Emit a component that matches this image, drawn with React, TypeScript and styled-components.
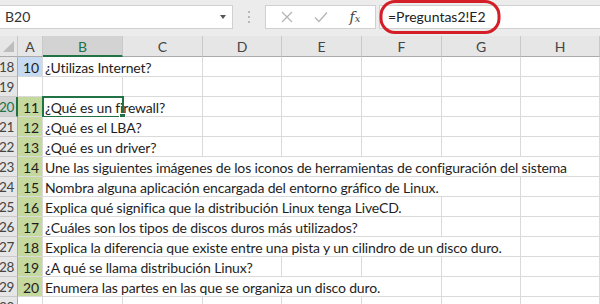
import styled, { createGlobalStyle } from "styled-components";

const GlobalStyle = createGlobalStyle`
    body {
        margin: 0;
        background: #ffffff;
        font-family: "Lato", "Liberation Sans", sans-serif;
    }
`

const COLS = "18px 25px 80px 80px 79px 80px 80px 79px 79px";
const green = "#217346";

const Page = styled.div`
    width: 600px;
    height: 304px;
    overflow: hidden;
    background: #ececec;
`

const Toolbar = styled.div`
    display: flex;
    align-items: center;
    height: 30px;
    padding-top: 3px;
    box-sizing: border-box;
    position: relative;
`

const NameBox = styled.div`
    width: 233px;
    height: 24px;
    box-sizing: border-box;
    background: #fff;
    border: 1px solid #d0d0d0;
    border-left: none;
    display: flex;
    align-items: center;
    justify-content: space-between;
    padding: 0 6px 0 5px;
    font-size: 14px;
    color: #333;
`

const Arrow = styled.span`
    width: 0;
    height: 0;
    border-left: 3.5px solid transparent;
    border-right: 3.5px solid transparent;
    border-top: 4px solid #555;
`

const Dots = styled.div`
    width: 32px;
    display: flex;
    flex-direction: column;
    align-items: center;
    gap: 3px;
    span {
        width: 2px;
        height: 2px;
        background: #b8b8b8;
    }
`

const ButtonBox = styled.div`
    width: 111px;
    height: 24px;
    box-sizing: border-box;
    background: #fff;
    border: 1px solid #d0d0d0;
    display: flex;
    align-items: center;
    justify-content: space-around;
    padding: 0 4px;
`

const Fx = styled.span`
    font-family: "DejaVu Serif", "Liberation Serif", serif;
    font-style: italic;
    font-size: 14px;
    color: #444;
    span { font-size: 10px; }
`

const FormulaBox = styled.div`
    flex: 1;
    height: 24px;
    margin-left: 3px;
    box-sizing: border-box;
    background: #fff;
    border: 1px solid #d0d0d0;
    border-right: none;
    display: flex;
    align-items: center;
    padding-left: 8px;
    font-size: 14px;
    color: #222;
`

const Circle = styled.svg`
    position: absolute;
    left: 379px;
    top: 0;
`

const Sheet = styled.div`
    margin-top: 6px;
    background: #fff;
`

const Row = styled.div<{ $h?: number }>`
    display: grid;
    grid-template-columns: ${COLS};
    height: ${p => p.$h ?? 20}px;
    position: relative;
`

const ColHead = styled.div<{ $sel?: boolean }>`
    background: ${p => (p.$sel ? "#d3d3d3" : "#e6e6e6")};
    color: ${p => (p.$sel ? green : "#444")};
    border-right: 1px solid #c9c9c9;
    border-bottom: ${p => (p.$sel ? `2px solid ${green}` : "1px solid #ababab")};
    box-sizing: border-box;
    display: flex;
    align-items: center;
    justify-content: center;
    font-size: 14px;
    padding-top: 1px;
`

const Corner = styled.div`
    background: #e6e6e6;
    border-right: 1px solid #c9c9c9;
    border-bottom: 1px solid #ababab;
    box-sizing: border-box;
    position: relative;
    &::after {
        content: "";
        position: absolute;
        right: 3px;
        bottom: 4px;
        border-left: 11px solid transparent;
        border-bottom: 11px solid #bdbdbd;
    }
`

const RowHead = styled.div<{ $sel?: boolean }>`
    background: ${p => (p.$sel ? "#d3d3d3" : "#e6e6e6")};
    color: ${p => (p.$sel ? green : "#444")};
    border-right: ${p => (p.$sel ? `2px solid ${green}` : "1px solid #ababab")};
    border-bottom: 1px solid #c9c9c9;
    box-sizing: border-box;
    display: flex;
    align-items: center;
    justify-content: flex-end;
    padding-right: ${p => (p.$sel ? 2 : 3)}px;
    font-size: 13.5px;
    letter-spacing: -0.3px;
`

const Cell = styled.div<{ $fill?: string; $span?: number; $right?: boolean }>`
    grid-column: span ${p => p.$span ?? 1};
    background: ${p => p.$fill ?? "#fff"};
    border-right: 1px solid #dadada;
    border-bottom: 1px solid #dadada;
    box-sizing: border-box;
    display: flex;
    align-items: center;
    justify-content: ${p => (p.$right ? "flex-end" : "flex-start")};
    padding: 1px 3px 0 2px;
    font-size: 14px;
    letter-spacing: -0.15px;
    color: #1e1e1e;
    white-space: nowrap;
    overflow: hidden;
`

const Selection = styled.div`
    position: absolute;
    left: 42px;
    top: -1px;
    width: 82px;
    height: 22px;
    box-sizing: border-box;
    border: 2px solid ${green};
    pointer-events: none;
    &::after {
        content: "";
        position: absolute;
        right: -4px;
        bottom: -4px;
        width: 5px;
        height: 5px;
        background: ${green};
        border: 1px solid #fff;
    }
`

type RowData = { n: number; a?: string; b?: string; span?: number; fill?: string };

const blue = "#c6dbf1";
const lime = "#c5d89e";

const rows: RowData[] = [
    { n: 18, a: "10", b: "¿Utilizas Internet?", span: 2, fill: blue },
    { n: 19 },
    { n: 20, a: "11", b: "¿Qué es un firewall?", span: 2, fill: lime },
    { n: 21, a: "12", b: "¿Qué es el LBA?", span: 2, fill: lime },
    { n: 22, a: "13", b: "¿Qué es un driver?", span: 2, fill: lime },
    { n: 23, a: "14", b: "Une las siguientes imágenes de los iconos de herramientas de configuración del sistema", span: 7, fill: lime },
    { n: 24, a: "15", b: "Nombra alguna aplicación encargada del entorno gráfico de Linux.", span: 6, fill: lime },
    { n: 25, a: "16", b: "Explica qué significa que la distribución Linux tenga LiveCD.", span: 5, fill: lime },
    { n: 26, a: "17", b: "¿Cuáles son los tipos de discos duros más utilizados?", span: 5, fill: lime },
    { n: 27, a: "18", b: "Explica la diferencia que existe entre una pista y un cilindro de un disco duro.", span: 6, fill: lime },
    { n: 28, a: "19", b: "¿A qué se llama distribución Linux?", span: 3, fill: lime },
    { n: 29, a: "20", b: "Enumera las partes en las que se organiza un disco duro.", span: 5, fill: lime },
    { n: 30 },
];

const letters = ["A", "B", "C", "D", "E", "F", "G", "H"];

const App = () => {
    return (
        <Page>
            <GlobalStyle />
            <Toolbar>
                <NameBox>
                    B20
                    <Arrow />
                </NameBox>
                <Dots>
                    <span />
                    <span />
                    <span />
                </Dots>
                <ButtonBox>
                    <svg width="12" height="12" viewBox="0 0 12 12">
                        <path d="M1 1L11 11M11 1L1 11" stroke="#b5b5b5" strokeWidth="1.3" fill="none" />
                    </svg>
                    <svg width="14" height="12" viewBox="0 0 14 12">
                        <path d="M1 6.5L5 10.5L13 1.5" stroke="#b5b5b5" strokeWidth="1.3" fill="none" />
                    </svg>
                    <Fx>f<span>x</span></Fx>
                </ButtonBox>
                <FormulaBox>=Preguntas2!E2</FormulaBox>
                <Circle width="122" height="35" viewBox="0 0 122 35">
                    <rect x="2" y="1.5" width="118" height="31" rx="14" ry="14" fill="none" stroke="#d41f28" strokeWidth="3" />
                </Circle>
            </Toolbar>
            <Sheet>
                <Row $h={21}>
                    <Corner />
                    {letters.map(l => (
                        <ColHead key={l} $sel={l === "B"}>{l}</ColHead>
                    ))}
                </Row>
                {rows.map(r => {
                    const span = r.span ?? 1;
                    const rest = 7 - span;
                    return (
                        <Row key={r.n}>
                            <RowHead $sel={r.n === 20}>{r.n}</RowHead>
                            <Cell $fill={r.fill} $right>{r.a}</Cell>
                            <Cell $span={span}>{r.b}</Cell>
                            {Array.from({ length: rest }).map((_, i) => (
                                <Cell key={i} />
                            ))}
                            {r.n === 20 && <Selection />}
                        </Row>
                    );
                })}
            </Sheet>
        </Page>
    );
};

export default App;
